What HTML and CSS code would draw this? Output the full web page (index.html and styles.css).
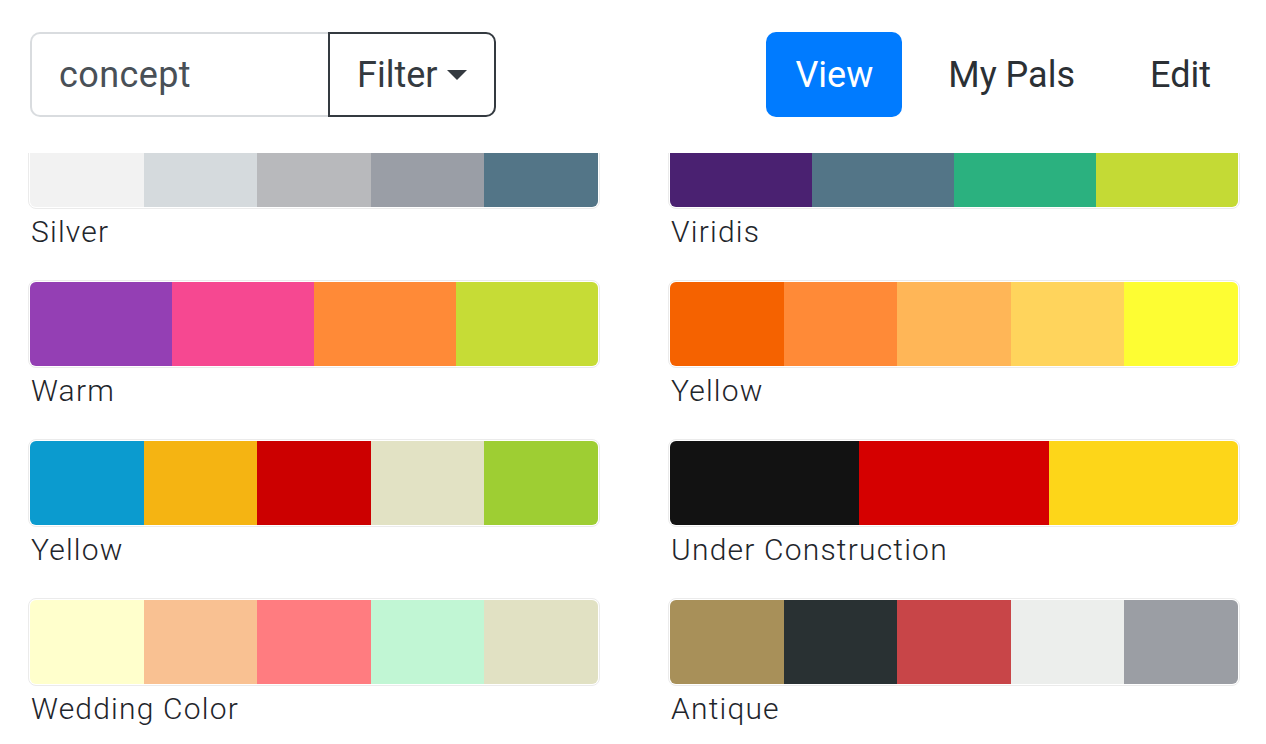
FILE: index.html
```html
<!DOCTYPE html>
<html lang="en">
<head>
  <meta charset="UTF-8">
  <meta name="viewport" content="width=device-width, initial-scale=1.0">
  <title>Pals</title>
  <link rel="stylesheet" href="styles.css">
</head>
<body>
  <div class="container">
    <div class="topbar">
      <div class="search-group">
        <input type="text" class="search-input" value="concept">
        <button class="filter-btn">Filter<span class="caret"></span></button>
      </div>
      <ul class="nav">
        <li><a class="nav-link active" href="#">View</a></li>
        <li><a class="nav-link" href="#">My Pals</a></li>
        <li><a class="nav-link" href="#">Edit</a></li>
      </ul>
    </div>

    <div class="palette-list">
      <div class="palette-grid">
        <div class="palette">
          <div class="swatches">
            <span style="background:#f2f2f2"></span>
            <span style="background:#d5dadd"></span>
            <span style="background:#b8b9bc"></span>
            <span style="background:#9a9ea6"></span>
            <span style="background:#537587"></span>
          </div>
          <div class="palette-name">Silver</div>
        </div>
        <div class="palette">
          <div class="swatches">
            <span style="background:#4a2171"></span>
            <span style="background:#537587"></span>
            <span style="background:#2bb17f"></span>
            <span style="background:#c4da35"></span>
          </div>
          <div class="palette-name">Viridis</div>
        </div>

        <div class="palette">
          <div class="swatches">
            <span style="background:#943fb4"></span>
            <span style="background:#f64891"></span>
            <span style="background:#ff8a37"></span>
            <span style="background:#c6dc36"></span>
          </div>
          <div class="palette-name">Warm</div>
        </div>
        <div class="palette">
          <div class="swatches">
            <span style="background:#f56200"></span>
            <span style="background:#ff8a37"></span>
            <span style="background:#ffb657"></span>
            <span style="background:#ffd45c"></span>
            <span style="background:#fdfd33"></span>
          </div>
          <div class="palette-name">Yellow</div>
        </div>

        <div class="palette">
          <div class="swatches">
            <span style="background:#0b9bcf"></span>
            <span style="background:#f5b412"></span>
            <span style="background:#cc0000"></span>
            <span style="background:#e2e2c4"></span>
            <span style="background:#9ece33"></span>
          </div>
          <div class="palette-name">Yellow</div>
        </div>
        <div class="palette">
          <div class="swatches">
            <span style="background:#121212"></span>
            <span style="background:#d50000"></span>
            <span style="background:#fdd619"></span>
          </div>
          <div class="palette-name">Under Construction</div>
        </div>

        <div class="palette">
          <div class="swatches">
            <span style="background:#ffffcc"></span>
            <span style="background:#f9c192"></span>
            <span style="background:#ff7c80"></span>
            <span style="background:#c1f6d4"></span>
            <span style="background:#e1e1c3"></span>
          </div>
          <div class="palette-name">Wedding Color</div>
        </div>
        <div class="palette">
          <div class="swatches">
            <span style="background:#a89059"></span>
            <span style="background:#293133"></span>
            <span style="background:#c84548"></span>
            <span style="background:#eceeec"></span>
            <span style="background:#9b9ea4"></span>
          </div>
          <div class="palette-name">Antique</div>
        </div>
      </div>
    </div>
  </div>
</body>
</html>
```

FILE: styles.css
```css
html, body {
  margin: 0;
  height: 100%;
  overflow: hidden;
}
body {
  font-family: Roboto, "Liberation Sans", sans-serif;
  color: #212529;
  background-color: #fff;
}
.container {
  padding: 32px 26px 0 28px;
  box-sizing: border-box;
  height: 100%;
  display: flex;
  flex-direction: column;
}
.topbar {
  display: flex;
  justify-content: space-between;
  align-items: center;
  padding-left: 2px;
}
.search-group {
  display: flex;
  height: 85px;
}
.search-input {
  width: 298px;
  box-sizing: border-box;
  font-family: inherit;
  font-size: 36px;
  letter-spacing: 0.4px;
  color: #495057;
  padding: 0 27px;
  border: 2px solid #d9dcdf;
  border-right: none;
  border-radius: 10px 0 0 10px;
  outline: none;
}
.filter-btn {
  width: 168px;
  box-sizing: border-box;
  font-family: inherit;
  font-size: 36px;
  color: #343a40;
  background: #fff;
  padding: 0 27px;
  border: 2px solid #343a40;
  border-radius: 0 10px 10px 0;
  display: flex;
  align-items: center;
}
.caret {
  display: inline-block;
  margin-left: 10px;
  border-top: 10px solid #343a40;
  border-left: 10px solid transparent;
  border-right: 10px solid transparent;
}
.nav {
  display: flex;
  gap: 17px;
  list-style: none;
  margin: 0;
  padding: 0;
}
.nav-link {
  display: block;
  font-size: 36px;
  line-height: 54px;
  padding: 15.5px 29px;
  color: #2b3035;
  text-decoration: none;
  border-radius: 10px;
}
.nav-link.active {
  background-color: #007bff;
  color: #fff;
}
.palette-list {
  margin-top: 36px;
  flex: 1;
  overflow: hidden;
}
.palette-grid {
  margin-top: -32px;
  display: grid;
  grid-template-columns: 1fr 1fr;
  column-gap: 68px;
}
.palette {
  margin-bottom: 30px;
}
.swatches {
  display: flex;
  height: 84px;
  padding: 1px;
  border: 1px solid #ebebeb;
  border-radius: 8px;
}
.swatches span {
  flex: 1;
}
.swatches span:first-child {
  border-radius: 6px 0 0 6px;
}
.swatches span:last-child {
  border-radius: 0 6px 6px 0;
}
.palette-name {
  margin-top: 5px;
  padding-left: 3px;
  font-size: 30px;
  font-weight: 300;
  letter-spacing: 1.2px;
  line-height: 36px;
  color: #1f262c;
}
```
